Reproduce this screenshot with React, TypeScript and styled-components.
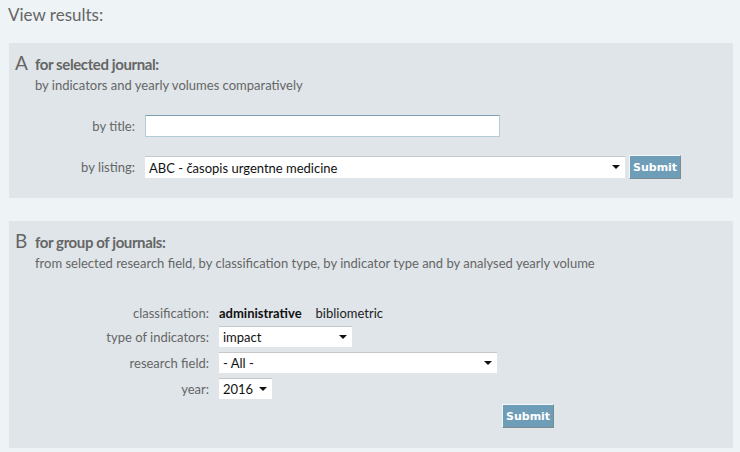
import React from "react";
import styled, { createGlobalStyle } from "styled-components";

const Global = createGlobalStyle`
  html, body {
    margin: 0;
    padding: 0;
    background: #eef3f6;
  }
  body {
    font-family: Lato, "Open Sans", sans-serif;
    color: #666;
  }
`;

const Page = styled.div`
  width: 740px;
  height: 452px;
  padding: 4px 7px 0 9px;
  box-sizing: border-box;
  display: flex;
  flex-direction: column;
`;

const PageTitle = styled.h2`
  margin: 0 0 0 -1px;
  font-size: 17px;
  font-weight: 400;
  color: #666;
  line-height: 22px;
`;

const Panel = styled.section<{ $top: number; $height: number }>`
  margin-top: ${(p) => p.$top}px;
  height: ${(p) => p.$height}px;
  background: #dfe5e9;
  padding: 10px 0 0 6px;
  box-sizing: border-box;
`;

const Heading = styled.div`
  display: flex;
  align-items: baseline;
  gap: 7px;
  line-height: 20px;
`;

const Letter = styled.span`
  font-size: 19px;
  color: #666;
  width: 13px;
`;

const HeadText = styled.span`
  font-size: 15px;
  font-weight: 700;
  letter-spacing: -0.4px;
  color: #666;
`;

const Sub = styled.div`
  margin: 2px 0 0 20px;
  font-size: 13px;
  line-height: 18px;
  color: #666;
`;

const Form = styled.div<{ $label: number; $top: number; $gap: number }>`
  display: grid;
  grid-template-columns: ${(p) => p.$label}px auto;
  column-gap: 10px;
  row-gap: ${(p) => p.$gap}px;
  margin-top: ${(p) => p.$top}px;
  align-items: center;
`;

const Label = styled.label`
  text-align: right;
  font-size: 13px;
  color: #666;
`;

const Field = styled.div`
  display: flex;
  align-items: center;
  gap: 4px;
`;

const TextInput = styled.input<{ $w: number }>`
  width: ${(p) => p.$w}px;
  height: 22px;
  box-sizing: border-box;
  border: 1px solid #b4cbda;
  border-top-color: #7f9db3;
  background: #fff;
  outline: none;
`;

const SelectWrap = styled.div<{ $w: number; $h: number }>`
  position: relative;
  width: ${(p) => p.$w}px;
  height: ${(p) => p.$h}px;
`;

const Select = styled.select`
  appearance: none;
  width: 100%;
  height: 100%;
  box-sizing: border-box;
  border: none;
  border-top: 1px solid #c4c8cb;
  background: #fff;
  padding: 0 0 0 4px;
  font-family: Lato, "Open Sans", sans-serif;
  font-size: 13px;
  color: #111;
  outline: none;
`;

const Arrow = styled.svg`
  position: absolute;
  right: 5px;
  top: 50%;
  margin-top: -2px;
  pointer-events: none;
`;

const Button = styled.button`
  height: 24px;
  padding: 0 3px;
  background: #6e9db8;
  color: #fff;
  font-family: "DejaVu Sans", Verdana, sans-serif;
  font-weight: 700;
  font-size: 11px;
  border: 1px solid;
  border-color: #f4f7f9 #7d8a92 #7d8a92 #f4f7f9;
  cursor: pointer;
`;

const Options = styled.div`
  display: flex;
  gap: 14px;
  font-size: 13px;
  color: #222;
`;

const Option = styled.span<{ $active?: boolean }>`
  font-weight: ${(p) => (p.$active ? 700 : 400)};
  color: ${(p) => (p.$active ? "#111" : "#222")};
`;

const SubmitRow = styled.div`
  display: flex;
  padding-left: 487px;
  margin-top: 5px;
`;

function Dropdown({
  w,
  h = 22,
  value,
}: {
  w: number;
  h?: number;
  value: string;
}) {
  return (
    <SelectWrap $w={w} $h={h}>
      <Select defaultValue={value}>
        <option>{value}</option>
      </Select>
      <Arrow width="8" height="4" viewBox="0 0 8 4">
        <path d="M0 0h8L4 4z" fill="#111" />
      </Arrow>
    </SelectWrap>
  );
}

export default function App() {
  return (
    <Page>
      <Global />
      <PageTitle>View results:</PageTitle>
      <Panel $top={17} $height={155}>
        <Heading>
          <Letter>A</Letter>
          <HeadText>for selected journal:</HeadText>
        </Heading>
        <Sub>by indicators and yearly volumes comparatively</Sub>
        <Form $label={120} $top={21} $gap={18}>
          <Label>by title:</Label>
          <Field>
            <TextInput $w={355} />
          </Field>
          <Label>by listing:</Label>
          <Field>
            <Dropdown w={480} value="ABC - časopis urgentne medicine" />
            <Button>Submit</Button>
          </Field>
        </Form>
      </Panel>
      <Panel $top={23} $height={227}>
        <Heading>
          <Letter>B</Letter>
          <HeadText>for group of journals:</HeadText>
        </Heading>
        <Sub>
          from selected research field, by classification type, by indicator
          type and by analysed yearly volume
        </Sub>
        <Form $label={194} $top={33} $gap={5}>
          <Label>classification:</Label>
          <Options>
            <Option $active>administrative</Option>
            <Option>bibliometric</Option>
          </Options>
          <Label>type of indicators:</Label>
          <Dropdown w={133} h={21} value="impact" />
          <Label>research field:</Label>
          <Dropdown w={278} h={21} value="- All -" />
          <Label>year:</Label>
          <Dropdown w={53} h={21} value="2016" />
        </Form>
        <SubmitRow>
          <Button>Submit</Button>
        </SubmitRow>
      </Panel>
    </Page>
  );
}
